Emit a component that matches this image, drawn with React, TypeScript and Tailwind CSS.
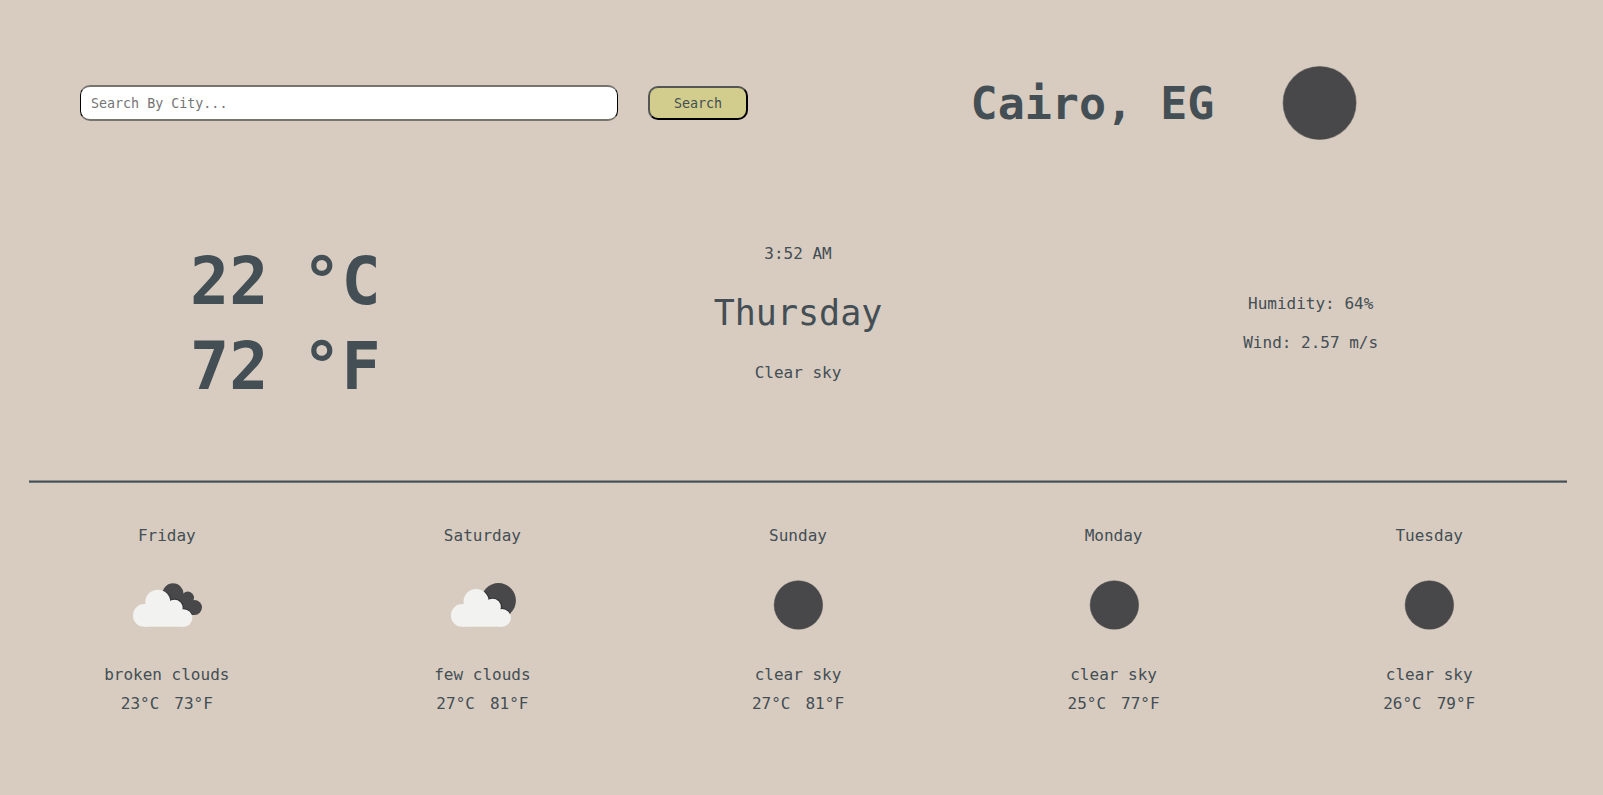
import { useState } from "react";

type Condition = "clear" | "few" | "broken";

interface ForecastDay {
  day: string;
  condition: Condition;
  description: string;
  celsius: number;
  fahrenheit: number;
}

const forecast: ForecastDay[] = [
  { day: "Friday", condition: "broken", description: "broken clouds", celsius: 23, fahrenheit: 73 },
  { day: "Saturday", condition: "few", description: "few clouds", celsius: 27, fahrenheit: 81 },
  { day: "Sunday", condition: "clear", description: "clear sky", celsius: 27, fahrenheit: 81 },
  { day: "Monday", condition: "clear", description: "clear sky", celsius: 25, fahrenheit: 77 },
  { day: "Tuesday", condition: "clear", description: "clear sky", celsius: 26, fahrenheit: 79 },
];

function WeatherIcon({ condition, className }: { condition: Condition; className: string }) {
  return (
    <svg viewBox="0 0 100 100" className={className} aria-hidden="true">
      {condition === "clear" && (
        <circle cx="50.4" cy="50" r="24.3" fill="#48484a" stroke="#48484a" strokeOpacity="0.5" strokeWidth="0.8" />
      )}
      {condition === "broken" && (
        <>
          <g fill="#48484a">
            <circle cx="56" cy="38.9" r="10.6" />
            <circle cx="70.8" cy="42.8" r="6.2" />
            <circle cx="77.5" cy="52.5" r="7.5" />
            <path d="M56 39 L70 39 L77 50 L77.5 60 L62 60 Z" />
          </g>
          <g fill="none" stroke="#333335" strokeWidth="1.2">
            <path d="M49.3 37.5 A13 13 0 0 1 53.8 45 A8.8 8.8 0 0 1 66.2 53.6 Q72 54.5 75 59.5" />
          </g>
          <g fill="#f2f2f0">
            <circle cx="27.3" cy="60.4" r="11.3" />
            <circle cx="40.8" cy="47.2" r="12.5" />
            <circle cx="57.5" cy="53" r="8.2" />
            <circle cx="66.6" cy="63" r="8.7" />
            <path d="M27.3 71.7 L27.3 50 L50 46 L66 55 L66.6 71.7 Z" />
          </g>
        </>
      )}
      {condition === "few" && (
        <>
          <circle cx="66.5" cy="45.5" r="17.4" fill="#48484a" />
          <path
            d="M52.7 36.8 A13 13 0 0 1 57 44.2 A8.8 8.8 0 0 1 69.5 53.4 Q75.5 54 78.1 58.6"
            fill="none"
            stroke="#333335"
            strokeWidth="1.2"
          />
          <g fill="#f2f2f0">
            <circle cx="30.2" cy="60.4" r="11.3" />
            <circle cx="44.1" cy="46.6" r="12.6" />
            <circle cx="60.7" cy="52" r="8.2" />
            <circle cx="70.1" cy="62.9" r="8.8" />
            <path d="M30.2 71.7 L30.2 50 L52.5 46 L68.5 54.5 L70.1 71.7 Z" />
          </g>
        </>
      )}
    </svg>
  );
}

function Temperature({ value, unit }: { value: number; unit: string }) {
  return (
    <p className="flex justify-center gap-[34px]">
      <span>{value}</span>
      <span>°{unit}</span>
    </p>
  );
}

export default function App() {
  const [city, setCity] = useState("");

  return (
    <div className="min-h-screen bg-[#d8ccc0] pt-7 pr-9 pb-16 pl-[29px] font-['DejaVu_Sans_Mono',monospace] text-base leading-5 text-[#434e55]">
      <header className="grid grid-cols-2 items-center">
        <form
          className="flex items-center gap-[30px] pr-[50px] pl-[51px] [font-size:smaller]"
          onSubmit={(event) => event.preventDefault()}
        >
          <input
            type="text"
            aria-label="City"
            placeholder="Search By City..."
            value={city}
            onChange={(event) => setCity(event.target.value)}
            className="h-9 min-w-0 flex-1 rounded-[10px] border border-x-black border-y-2 border-y-[#77736f] bg-white px-2.5 placeholder:text-[#757575]"
          />
          <button
            type="submit"
            className="h-[34px] w-[100px] rounded-[10px] border-2 border-t-[#555555] border-r-black border-b-black border-l-[#555555] bg-[#d2cd8c] pt-0.5"
          >
            Search
          </button>
        </form>
        <div className="flex items-center justify-center gap-[30px]">
          <h1 className="pt-0.5 text-[45px] leading-[52px] font-bold">Cairo, EG</h1>
          <WeatherIcon condition="clear" className="size-[150px]" />
        </div>
      </header>

      <main>
        <section className="mt-[61px] grid grid-cols-3 text-center">
          <div className="text-[65px] leading-[85px] font-bold">
            <Temperature value={22} unit="C" />
            <Temperature value={72} unit="F" />
          </div>
          <div className="pt-[5px]">
            <p>3:52 AM</p>
            <h2 className="mt-[27px] text-[35px] leading-[44px]">Thursday</h2>
            <p className="mt-7">Clear sky</p>
          </div>
          <div className="flex flex-col gap-[19px] pt-[55px]">
            <p>Humidity: 64%</p>
            <p>Wind: 2.57 m/s</p>
          </div>
        </section>

        <hr className="mt-[71px] h-[3px] border-y border-t-[#8f8e8a] border-b-[#70777a] bg-[#434e55]" />

        <section className="mt-[43px] grid grid-cols-5 gap-10 text-center">
          {forecast.map((item) => (
            <article key={item.day} className="flex flex-col items-center">
              <h3>{item.day}</h3>
              <WeatherIcon condition={item.condition} className="mt-[9px] mb-[10px] size-[100px]" />
              <p>{item.description}</p>
              <p className="mt-[9px] flex gap-[15px]">
                <span>{item.celsius}°C</span>
                <span>{item.fahrenheit}°F</span>
              </p>
            </article>
          ))}
        </section>
      </main>
    </div>
  );
}
